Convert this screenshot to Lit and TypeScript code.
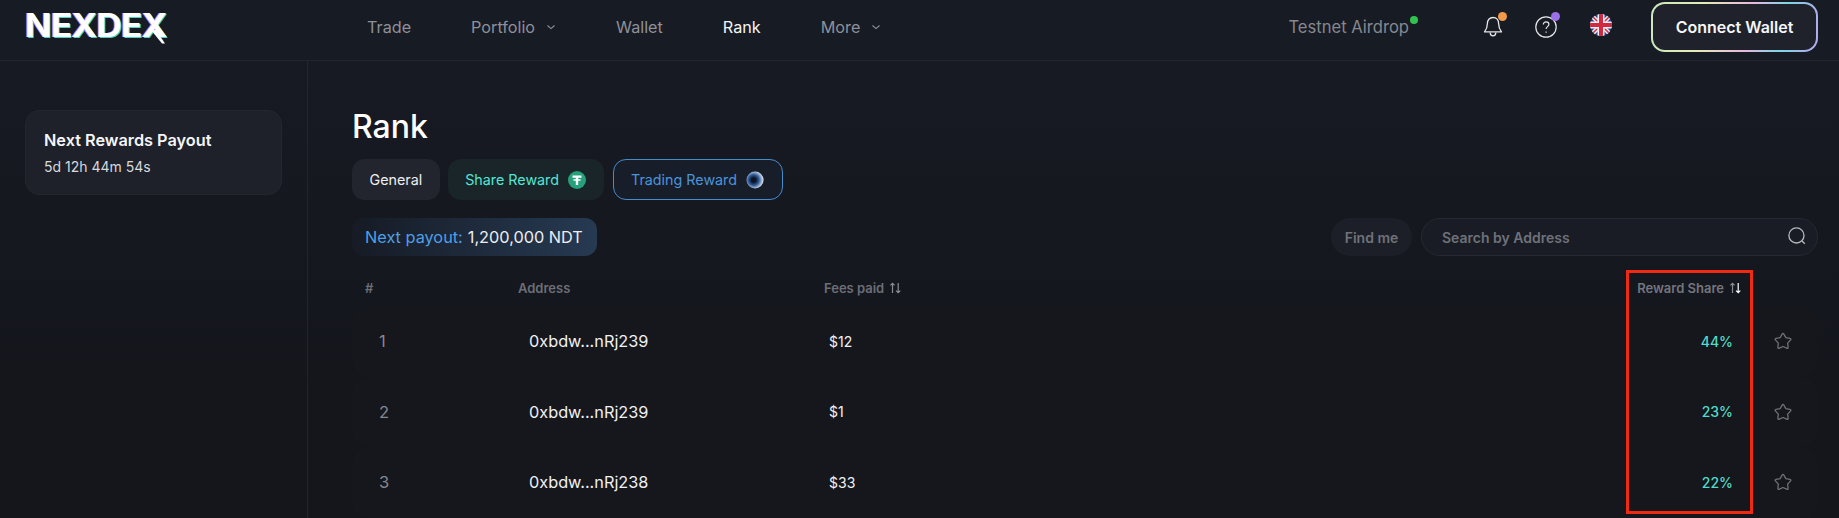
import { LitElement, html, css, svg } from "lit";
import { customElement } from "lit/decorators.js";

const RANKS = [
  { rank: 1, address: "0xbdw...nRj239", fees: "$12", share: "44%" },
  { rank: 2, address: "0xbdw...nRj239", fees: "$1", share: "23%" },
  { rank: 3, address: "0xbdw...nRj238", fees: "$33", share: "22%" },
];

const chevron = html`<svg class="chevron" width="10" height="6" viewBox="0 0 10 6" fill="none" stroke="currentColor" stroke-width="1.1"><path d="M1.5 1.5 5 4.6l3.5-3.1" /></svg>`;

const sortIcon = (active: boolean) => html`<svg class="sort" width="13" height="12" viewBox="0 0 13 12" fill="none" stroke-width="1.2">
  <path d="M3.5 11V1.4M1.4 3.4l2.1-2.1 2.1 2.1" stroke="#8b8d96" />
  <path d="M9.2 1v9.600M7.100 8.600l2.100 2.100 2.100-2.100" stroke=${active ? "#ffffff" : "#8b8d96"} />
</svg>`;

// rounded five point star, tips are curved so it looks soft like the reference
function starPath(cx: number, cy: number, outer: number, inner: number) {
  const pts: [number, number][] = [];
  for (let i = 0; i < 10; i++) {
    const r = i % 2 === 0 ? outer : inner;
    const a = ((-90 + i * 36) * Math.PI) / 180;
    pts.push([cx + r * Math.cos(a), cy + r * Math.sin(a)]);
  }
  const mix = (p: [number, number], q: [number, number], t: number) =>
    `${(p[0] + (q[0] - p[0]) * t).toFixed(2)} ${(p[1] + (q[1] - p[1]) * t).toFixed(2)}`;
  let d = "";
  for (let i = 0; i < 10; i += 2) {
    const tip = pts[i];
    const prev = pts[(i + 9) % 10];
    const next = pts[(i + 1) % 10];
    d += `${i === 0 ? "M" : "L"}${mix(tip, prev, 0.3)} Q${tip[0].toFixed(2)} ${tip[1].toFixed(2)} ${mix(tip, next, 0.3)} L${next[0].toFixed(2)} ${next[1].toFixed(2)} `;
  }
  return d + "Z";
}

const star = html`<svg width="18" height="18" viewBox="0 0 18 18" fill="none" stroke="#6f7178" stroke-width="1.3" stroke-linejoin="round"><path d=${starPath(9, 9.6, 9, 4.9)} /></svg>`;

const flag = svg`<svg width="22" height="22" viewBox="0 0 22 22">
  <defs><clipPath id="flag-clip"><circle cx="11" cy="11" r="11" /></clipPath></defs>
  <g clip-path="url(#flag-clip)">
    <rect width="22" height="22" fill="#27478f" />
    <path d="M0 0l22 22M22 0L0 22" stroke="#f1f1f4" stroke-width="4.4" />
    <path d="M0 0l22 22M22 0L0 22" stroke="#d3283f" stroke-width="1.5" />
    <path d="M11 0v22M0 11h22" stroke="#f1f1f4" stroke-width="7" />
    <path d="M11 0v22M0 11h22" stroke="#d3283f" stroke-width="4" />
  </g>
</svg>`;

@customElement("app-root")
export class AppRoot extends LitElement {
  static override styles = css`
    :host {
      display: block;
      width: 1839px;
      height: 518px;
      overflow: hidden;
      position: relative;
      background: #171b24;
      font-family: Inter, "Liberation Sans", sans-serif;
      color: #fff;
    }
    header {
      height: 61px;
      box-sizing: border-box;
      border-bottom: 1px solid #21252e;
      display: flex;
      align-items: center;
      padding: 0 21px 7px 25px;
    }
    .logo {
      position: relative;
      width: 145px;
      margin-top: -2px;
      font-size: 32px;
      font-weight: 700;
      letter-spacing: -0.6px;
      line-height: 30px;
      text-shadow: -1px 0 #d58cf0, 1px 1px #45d6c8;
    }
    .logo span {
      display: inline-block;
      transform: scaleX(1.09);
      transform-origin: left center;
    }
    .logo svg {
      position: absolute;
      left: 126px;
      top: 19px;
    }
    nav {
      display: flex;
      align-items: center;
      gap: 60px;
      margin-left: 197px;
      font-size: 16.2px;
      color: #8e9099;
    }
    nav a {
      display: flex;
      align-items: center;
      gap: 11px;
    }
    nav a.on {
      color: #f4f4f6;
    }
    .chevron {
      margin-top: 1px;
    }
    .right {
      margin-left: auto;
      display: flex;
      align-items: center;
    }
    .airdrop {
      position: relative;
      font-size: 16.6px;
      color: #85878f;
      margin-right: 73px;
    }
    .dot {
      position: absolute;
      border-radius: 50%;
    }
    .airdrop .dot {
      width: 8px;
      height: 8px;
      right: -9px;
      top: -1px;
      background: #33c24d;
    }
    .icon {
      position: relative;
      width: 22px;
      height: 24px;
      margin-right: 31px;
      display: flex;
    }
    .icon.help {
      margin-right: 33px;
    }
    .icon .dot {
      width: 9px;
      height: 9px;
      right: -3px;
      top: -3px;
    }
    .flag {
      margin-right: 39px;
    }
    .connect {
      width: 167px;
      height: 50px;
      box-sizing: border-box;
      border: 2px solid transparent;
      border-radius: 14px;
      background: linear-gradient(#1f222b, #1f222b) padding-box,
        linear-gradient(100deg, #c9e8c0 0%, #e6ecb4 30%, #e8b8dc 58%, #7fd6e6 78%, #b7a6ef 100%) border-box;
      display: flex;
      align-items: center;
      justify-content: center;
      font-size: 16px;
      font-weight: 600;
      color: #f6f6f8;
    }
    .body {
      display: flex;
      height: 457px;
      background: linear-gradient(#171a23, #14161c 70%);
    }
    aside {
      width: 308px;
      box-sizing: border-box;
      flex: none;
      border-right: 1px solid #21252e;
      padding: 49px 25px 0;
    }
    .payout-card {
      width: 257px;
      height: 85px;
      box-sizing: border-box;
      padding: 19px 18px;
      background: #1e2129;
      border: 1px solid #23262f;
      border-radius: 14px;
    }
    .payout-card b {
      display: block;
      font-size: 16.3px;
      font-weight: 600;
      line-height: 20px;
      color: #f5f5f7;
    }
    .payout-card span {
      display: block;
      margin-top: 8px;
      font-size: 14px;
      line-height: 17px;
      color: #d8d9dd;
    }
    main {
      flex: 1;
      min-width: 0;
      padding: 44px 21px 0 44px;
    }
    h1 {
      margin: 0;
      font-size: 32px;
      font-weight: 500;
      line-height: 44px;
      color: #fff;
    }
    .tabs {
      display: flex;
      gap: 8px;
      margin-top: 10px;
    }
    .tab {
      height: 41px;
      box-sizing: border-box;
      display: flex;
      align-items: center;
      gap: 9px;
      padding: 0 17.5px;
      border-radius: 13px;
      font-size: 14.3px;
      background: #22252e;
      color: #eeeef0;
    }
    .tab.share {
      background: #1a2529;
      color: #52e6d5;
    }
    .tab.trading {
      margin-left: 1px;
      background: #181d2a;
      border: 1.5px solid #468ccb;
      color: #4a94dc;
    }
    .toolbar {
      display: flex;
      align-items: center;
      margin-top: 18px;
    }
    .next {
      height: 38px;
      width: 245px;
      box-sizing: border-box;
      display: flex;
      align-items: center;
      gap: 5px;
      padding-left: 13px;
      border-radius: 12px;
      background: linear-gradient(90deg, #161b25, #263a52);
      font-size: 16.3px;
      color: #eceef2;
    }
    .next em {
      font-style: normal;
      color: #4f9fe6;
    }
    .find {
      margin-left: auto;
      height: 38px;
      width: 81px;
      display: flex;
      align-items: center;
      justify-content: center;
      border-radius: 19px;
      background: #1c1f27;
      font-size: 14px;
      font-weight: 600;
      color: #6f717a;
    }
    .search {
      margin-left: 9px;
      width: 397px;
      height: 38px;
      box-sizing: border-box;
      display: flex;
      align-items: center;
      justify-content: space-between;
      padding: 0 10px 0 20px;
      border: 1px solid #262932;
      border-radius: 19px;
      background: #191c24;
      font-size: 14px;
      font-weight: 600;
      color: #6f717a;
    }
    .search svg {
      margin-top: -3px;
    }
    .row {
      display: grid;
      grid-template-columns: 153px 306px 1fr 130px 72px;
      align-items: center;
    }
    .head {
      margin-top: 21px;
      height: 21px;
      padding-left: 13px;
      font-size: 13px;
      font-weight: 600;
      color: #6c6e77;
    }
    .head span {
      display: flex;
      align-items: center;
      gap: 5px;
    }
    .head .reward {
      justify-content: flex-end;
      padding-right: 4px;
      color: #73757e;
    }
    .rows {
      margin-top: 8px;
      display: flex;
      flex-direction: column;
    }
    .rows .row {
      height: 70.5px;
      padding-left: 13px;
      border-radius: 16px;
      background: #15171d;
      color: #f0f0f3;
    }
    .num {
      padding-left: 14px;
      font-size: 16.5px;
      color: #868892;
    }
    .addr {
      padding-left: 11px;
      font-size: 16.3px;
    }
    .fees {
      padding-left: 5px;
      font-size: 14px;
    }
    .pct {
      text-align: right;
      padding-right: 13px;
      font-size: 14px;
      font-weight: 500;
      color: #4fdccb;
    }
    .fav {
      display: flex;
      justify-content: center;
      padding-left: 2px;
    }
    .mark {
      position: absolute;
      left: 1626px;
      top: 270px;
      width: 127px;
      height: 244px;
      box-sizing: border-box;
      border: 3px solid #f02a12;
      pointer-events: none;
    }
  `;

  override render() {
    return html`
      <header>
        <div class="logo">
          <span>NEXDEX</span>
          <svg width="14" height="14" viewBox="0 0 14 14"><path d="M0 0h5l9 13.500h-3z" fill="#fff" /></svg>
        </div>
        <nav>
          <a>Trade</a>
          <a>Portfolio ${chevron}</a>
          <a>Wallet</a>
          <a class="on">Rank</a>
          <a>More ${chevron}</a>
        </nav>
        <div class="right">
          <div class="airdrop">Testnet Airdrop<i class="dot"></i></div>
          <div class="icon">
            <svg width="22" height="24" viewBox="0 0 22 24" fill="none" stroke="#e6e6ea" stroke-width="1.3" stroke-linejoin="round">
              <path d="M11 2.500c-3.600 0-5.600 2.700-5.600 6 0 4-1 6-2.900 8.400h17c-1.900-2.400-2.900-4.400-2.900-8.400 0-3.300-2-6-5.600-6z" />
              <path d="M8.200 17.500c0 2 1.200 3.300 2.800 3.300s2.800-1.300 2.800-3.300" />
            </svg>
            <i class="dot" style="background:#f2994a"></i>
          </div>
          <div class="icon help">
            <svg width="22" height="24" viewBox="0 0 22 24" fill="none" stroke="#e6e6ea" stroke-width="1.2">
              <circle cx="11" cy="12" r="10.200" />
              <path d="M8.300 9.600c0-1.700 1.200-2.800 2.800-2.800s2.800 1 2.800 2.500c0 2.300-2.800 2.400-2.800 4.700" />
              <path d="M11.100 16.400v1.400" />
            </svg>
            <i class="dot" style="background:#9d6fe8"></i>
          </div>
          <div class="flag">${flag}</div>
          <div class="connect">Connect Wallet</div>
        </div>
      </header>
      <div class="body">
        <aside>
          <div class="payout-card">
            <b>Next Rewards Payout</b>
            <span>5d 12h 44m 54s</span>
          </div>
        </aside>
        <main>
          <h1>Rank</h1>
          <div class="tabs">
            <div class="tab">General</div>
            <div class="tab share">
              Share Reward
              <svg width="18" height="18" viewBox="0 0 18 18">
                <circle cx="9" cy="9" r="9" fill="#26a17b" />
                <path d="M4.500 4.500h9v2.200h-3.300v1.500c1.700.1 3 .4 3 .8s-1.300.7-3 .8v4.200H7.800v-4.200c-1.700-.1-3-.4-3-.8s1.300-.7 3-.8V6.700H4.500z" fill="#fff" />
              </svg>
            </div>
            <div class="tab trading">
              Trading Reward
              <svg width="18" height="18" viewBox="0 0 18 18">
                <defs>
                  <radialGradient id="ndt" cx="0.42" cy="0.5" r="0.62">
                    <stop offset="0.2" stop-color="#0b1324" />
                    <stop offset="0.5" stop-color="#2f5a96" />
                    <stop offset="0.95" stop-color="#eef2f8" />
                  </radialGradient>
                </defs>
                <circle cx="9" cy="9" r="8.500" fill="url(#ndt)" />
              </svg>
            </div>
          </div>
          <div class="toolbar">
            <div class="next"><em>Next payout:</em> 1,200,000 NDT</div>
            <div class="find">Find me</div>
            <div class="search">
              Search by Address
              <svg width="20" height="20" viewBox="0 0 18 18" fill="none" stroke="#b5b7bd" stroke-width="1.2">
                <circle cx="8.500" cy="8.500" r="6.800" />
                <path d="M13.500 13.500l2.500 2.500" />
              </svg>
            </div>
          </div>
          <div class="row head">
            <span>#</span>
            <span>Address</span>
            <span>Fees paid ${sortIcon(false)}</span>
            <span class="reward">Reward Share ${sortIcon(true)}</span>
            <span></span>
          </div>
          <div class="rows">
            ${RANKS.map(
              (r) => html`
                <div class="row">
                  <div class="num">${r.rank}</div>
                  <div class="addr">${r.address}</div>
                  <div class="fees">${r.fees}</div>
                  <div class="pct">${r.share}</div>
                  <div class="fav">${star}</div>
                </div>
              `
            )}
          </div>
        </main>
      </div>
      <div class="mark"></div>
    `;
  }
}
